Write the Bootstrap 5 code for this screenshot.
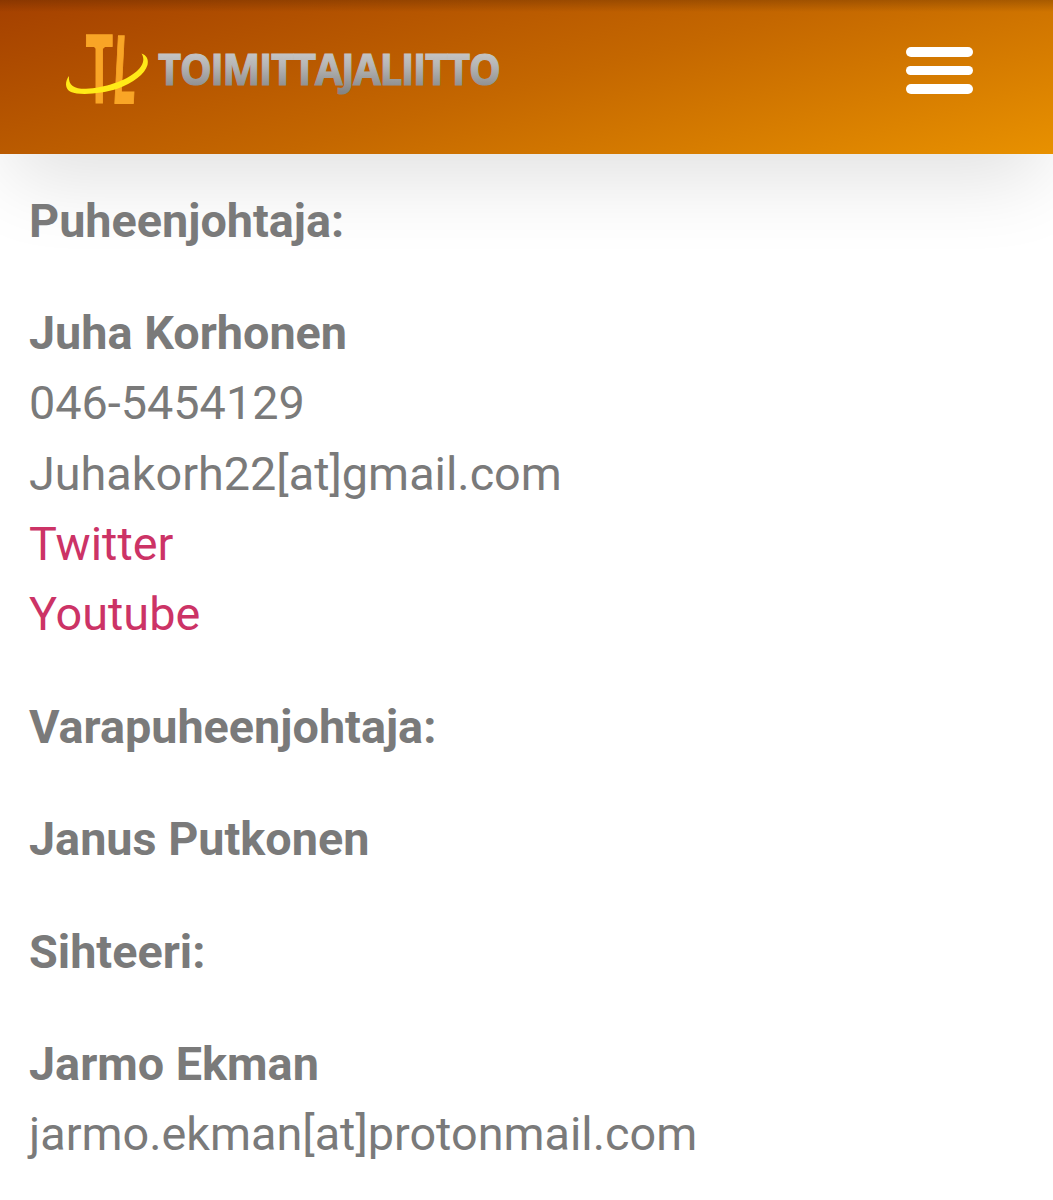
<!DOCTYPE html>
<html lang="fi">
<head>
<meta charset="utf-8">
<meta name="viewport" content="width=device-width, initial-scale=1">
<title>Toimittajaliitto</title>
<link href="https://cdn.jsdelivr.net/npm/bootstrap@5.3.0/dist/css/bootstrap.min.css" rel="stylesheet">
<style>
body{font-family:Roboto,"Liberation Sans",sans-serif;font-size:46.77px;line-height:70.25px;color:#7a7a7a;overflow:hidden}
.site-header{height:153.5px;padding:0 80px 0 60px;background:linear-gradient(180deg,rgba(70,30,0,.28),rgba(70,30,0,0) 12px),linear-gradient(165deg,#a44000 0%,#c46700 52%,#e89100 100%);box-shadow:0 35px 80px -10px rgba(0,0,0,.12)}
.brand-logo{display:block;width:450px;height:128px;overflow:visible}
.menu-toggle{width:67px;margin-top:47px;gap:9px}
.menu-toggle span{height:9.5px;border-radius:5px;background:#fff}
.contacts{padding:32.3px 29px 0;position:relative}
.contacts p{margin-bottom:42.2px}
.contacts a{color:#c36;text-decoration:none}
</style>
<script src="https://cdn.jsdelivr.net/npm/bootstrap@5.3.0/dist/js/bootstrap.bundle.min.js"></script>
</head>
<body>
<header class="site-header d-flex justify-content-between align-items-start">
<a href="#" aria-label="Toimittajaliitto">
<svg class="brand-logo" viewBox="60 0 450 128">
<defs><linearGradient id="silver" gradientUnits="userSpaceOnUse" x1="0" y1="52" x2="0" y2="92"><stop offset="0" stop-color="#c6c6c6"/><stop offset=".35" stop-color="#b5b5b5"/><stop offset="1" stop-color="#858585"/></linearGradient></defs>
<g fill="#f9a526" stroke="#f9a526" stroke-width=".8" font-family="Roboto, sans-serif" font-weight="700">
<text transform="translate(85.4 102.500) scale(1 2.2)" font-size="42.700" textLength="27.6" lengthAdjust="spacingAndGlyphs">T</text>
<text transform="translate(112.3 102.500) skewX(-3) scale(1 2.2)" font-size="42.700" textLength="22" lengthAdjust="spacingAndGlyphs">L</text>
</g>
<path d="M92 45h15l-3.500 3.500h-8z" fill="#f9a526"/>
<path d="M69 76C65 81 64.500 89 71 92C79 95.500 102 94 118 88.500C133 83 145 74 147.500 65C149 59 146 55 141.500 53.500C145 59 143.500 65 137 71C126 81 104 88 86 88.800C75 89 68 86 69 76Z" fill="#ffea18"/>
<text x="158" y="84.700" font-family="'Open Sans','Noto Sans',sans-serif" font-weight="700" font-size="42.5" letter-spacing="-1.300" textLength="341.500" lengthAdjust="spacingAndGlyphs" fill="url(#silver)" stroke="url(#silver)" stroke-width="1.1">TOIMITTAJALIITTO</text>
</svg>
</a>
<div class="menu-toggle d-flex flex-column" role="button" aria-label="Menu"><span></span><span></span><span></span></div>
</header>
<main class="contacts">
<p><strong>Puheenjohtaja:</strong></p>
<p><strong>Juha Korhonen</strong><br>046-5454129<br>Juhakorh22[at]gmail.com<br><a href="#">Twitter</a><br><a href="#">Youtube</a></p>
<p><strong>Varapuheenjohtaja:</strong></p>
<p><strong>Janus Putkonen</strong></p>
<p><strong>Sihteeri:</strong></p>
<p class="mb-0"><strong>Jarmo Ekman</strong><br>jarmo.ekman[at]protonmail.com</p>
</main>
</body>
</html>
